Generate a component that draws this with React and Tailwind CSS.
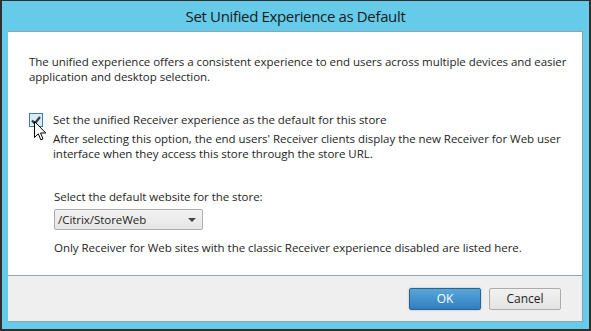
import React from 'react';

const font = { fontFamily: '"Segoe UI", "Open Sans", "Noto Sans", sans-serif' };

function Cursor() {
  return (
    <svg width="13" height="21" viewBox="0 0 13 21" className="absolute left-[34px] top-[121px]">
      <path d="M0.5 0.5 L0.5 16.5 L4.3 12.8 L6.8 18.8 L9 17.9 L6.6 12 L11.8 12 Z" fill="#fff" stroke="#000" strokeWidth="1" strokeLinejoin="miter" />
    </svg>
  );
}

function Checkbox() {
  return (
    <div className="w-[14px] h-[14px] mt-[1px] shrink-0 border border-[#3c7fb1] bg-[#d6edf9] flex items-center justify-center">
      <svg width="10" height="9" viewBox="0 0 10 9">
        <path d="M1 4.5 L3.8 7.5 L9 1" fill="none" stroke="#3a3a3a" strokeWidth="2.2" />
      </svg>
    </div>
  );
}

export default function App() {
  return (
    <div className="relative w-[591px] h-[331px] bg-[#2f2f2f] pt-[1px] px-[2px] pb-[2px] text-[#1e1e1e]" style={font}>
      <div className="w-full h-full bg-[#65cbe9] flex flex-col">
        {/* title bar */}
        <div className="h-[30px] shrink-0 flex items-center justify-center text-[15px] tracking-[-0.35px] text-[#1a1a1a] pt-[1px]">
          Set Unified Experience as Default
        </div>

        <div className="flex-1 mx-[6px] mb-[7px] flex flex-col border-t border-r border-b border-[#8aa4b4]">
          {/* content */}
          <div className="flex-1 bg-white border-b border-[#97a5b3] pl-[21px] pt-[22px] text-[11.5px] tracking-[-0.04px] leading-[15px]">
            <p className="whitespace-nowrap">
              The unified experience offers a consistent experience to end users across multiple devices and easier
              <br />
              application and desktop selection.
            </p>

            <div className="flex gap-[10px] mt-[28px]">
              <Checkbox />
              <div className="whitespace-nowrap">
                <p>Set the unified Receiver experience as the default for this store</p>
                <p className="mt-[4px]">
                  After selecting this option, the end users' Receiver clients display the new Receiver for Web user
                  <br />
                  interface when they access this store through the store URL.
                </p>
              </div>
            </div>

            <div className="ml-[25px] mt-[28px] whitespace-nowrap">
              <p>Select the default website for the store:</p>
              <div className="mt-[5px] w-[149px] h-[21px] border border-[#acacac] rounded-[2px] bg-gradient-to-b from-[#f2f2f2] to-[#e6e6e6] flex items-center justify-between pl-[3px] pr-[6px]">
                <span>/Citrix/StoreWeb</span>
                <svg width="8" height="4" viewBox="0 0 8 4">
                  <path d="M0 0 L8 0 L4 4 Z" fill="#444" />
                </svg>
              </div>
              <p className="mt-[10px]">Only Receiver for Web sites with the classic Receiver experience disabled are listed here.</p>
            </div>
          </div>

          {/* footer */}
          <div className="h-[45px] shrink-0 bg-[#efefef] flex items-start justify-end gap-[8px] pt-[12px] pr-[21px] text-[12px]">
            <button className="w-[72px] h-[22px] rounded-[2px] border border-[#2c628b] bg-gradient-to-b from-[#5aa6d9] to-[#2f7fc0] text-white shadow-[0_0_2px_#7fb6dd]">
              OK
            </button>
            <button className="w-[72px] h-[22px] rounded-[2px] border border-[#acacac] bg-gradient-to-b from-[#f2f2f2] to-[#e3e3e3] text-[#1e1e1e]">
              Cancel
            </button>
          </div>
        </div>
      </div>
      <Cursor />
    </div>
  );
}
